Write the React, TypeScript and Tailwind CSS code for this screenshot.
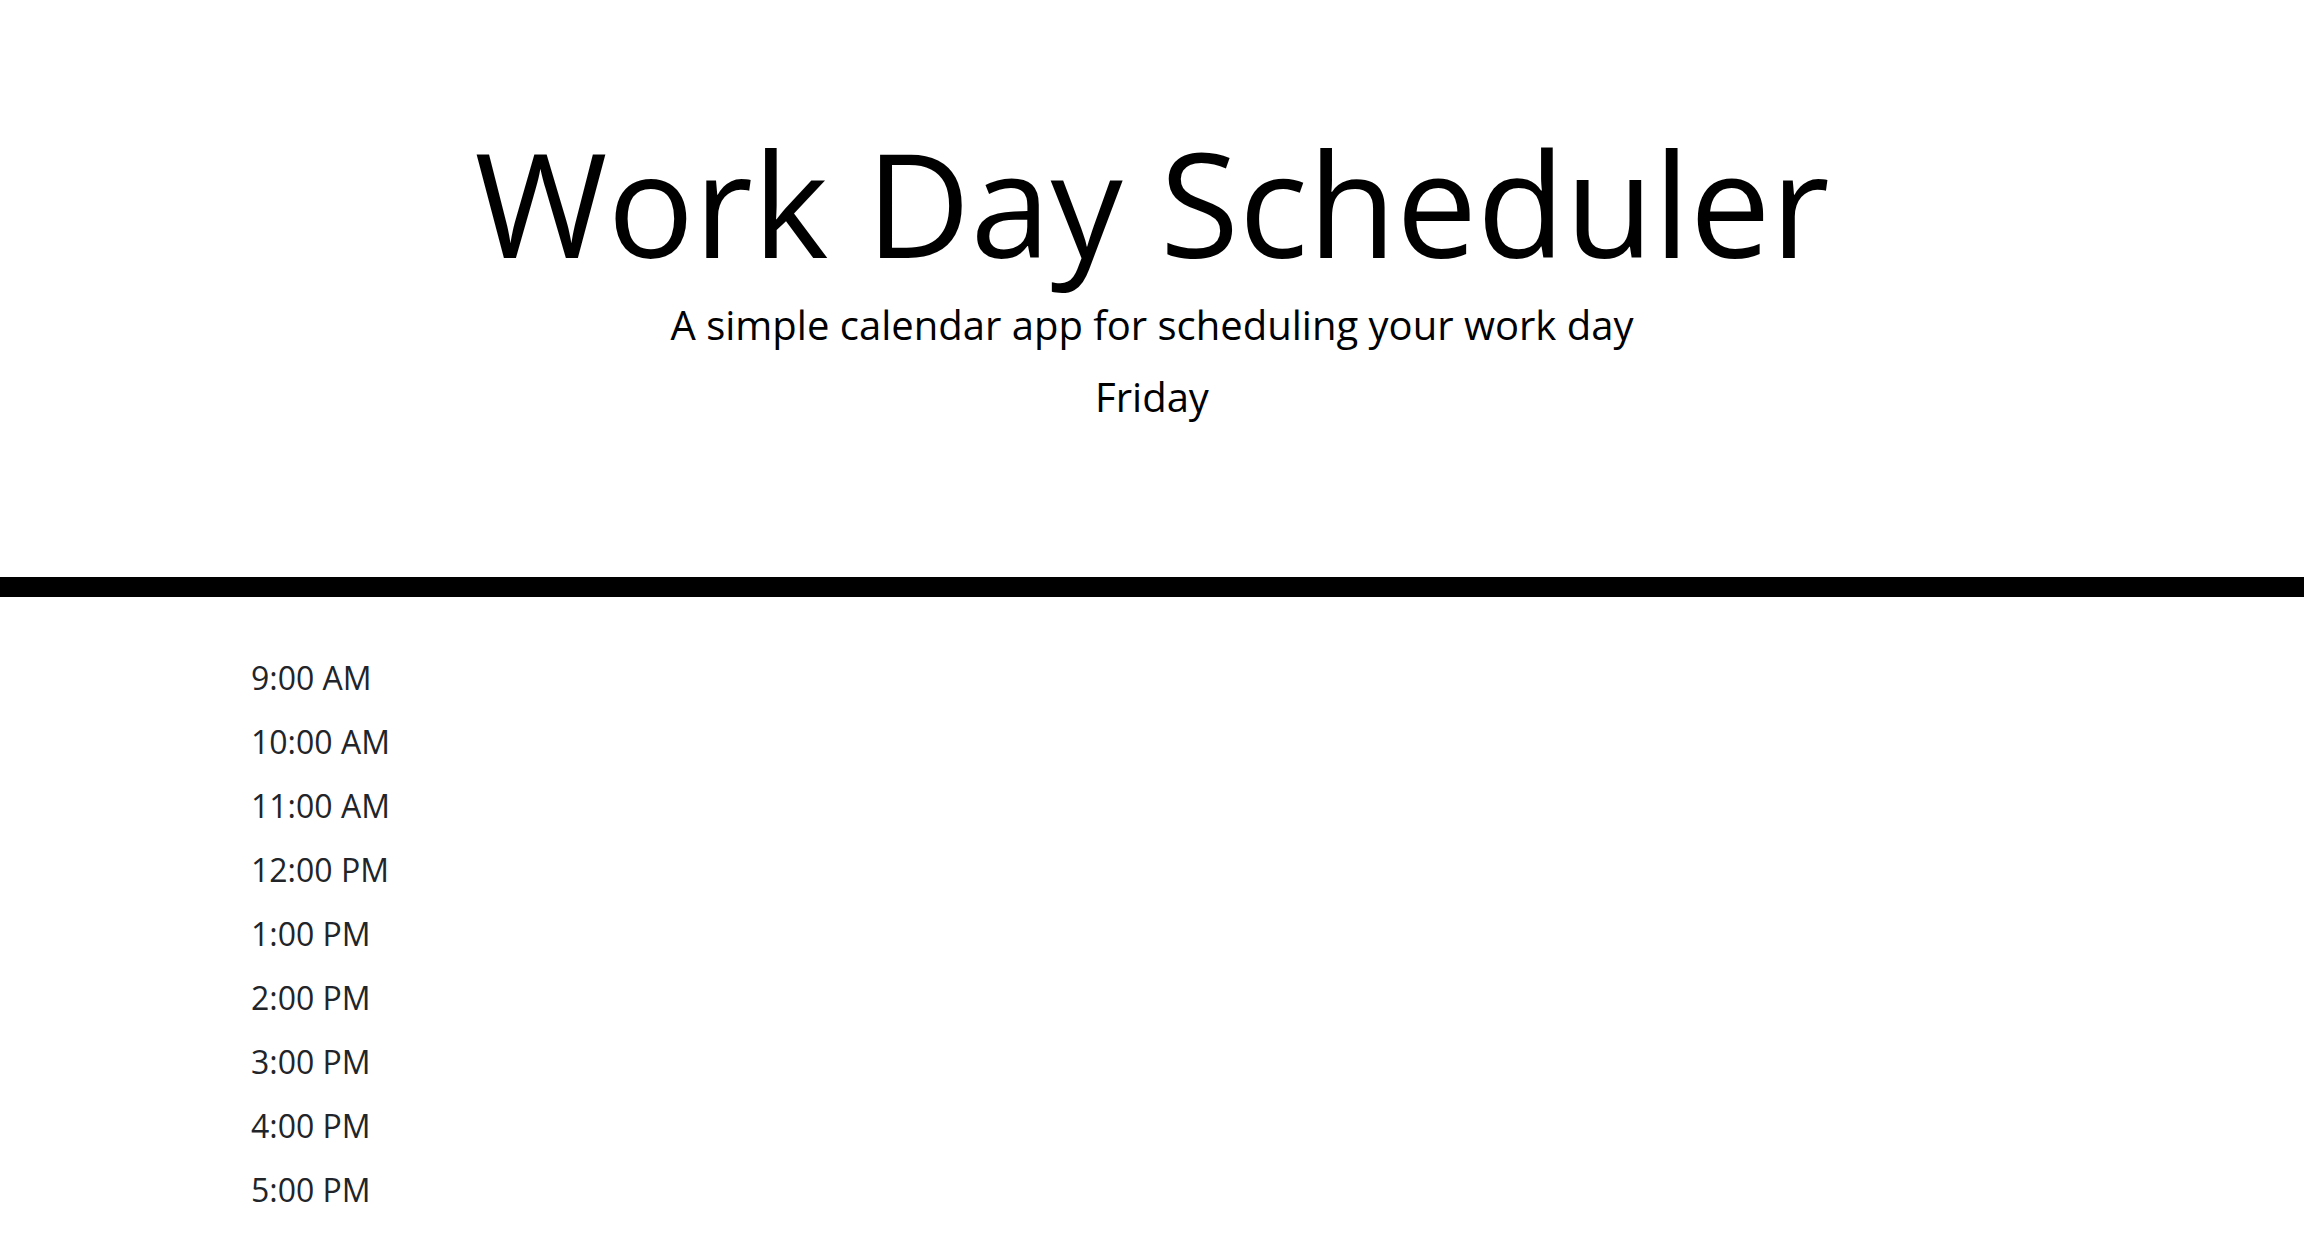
import React from "react";

const hours = [
  "9:00 AM",
  "10:00 AM",
  "11:00 AM",
  "12:00 PM",
  "1:00 PM",
  "2:00 PM",
  "3:00 PM",
  "4:00 PM",
  "5:00 PM",
];

export default function App() {
  return (
    <div className="min-h-screen bg-white" style={{ fontFamily: '"Open Sans", sans-serif' }}>
      <header className="flex flex-col items-center pt-[116px] pb-[150px] text-black border-b-[20px] border-black">
        <h1 className="text-[144px] leading-[1.2] font-normal">Work Day Scheduler</h1>
        <p className="mt-[6px] text-[40px] leading-[1.5]">A simple calendar app for scheduling your work day</p>
        <p className="mt-[12px] text-[40px] leading-[1.5]">Friday</p>
      </header>
      <main className="pt-[49px] pb-[40px] pl-[251px]">
        {hours.map((h) => (
          <div key={h} className="h-[64px] leading-[64px] text-[32px] text-[#212529]">
            {h}
          </div>
        ))}
      </main>
    </div>
  );
}
